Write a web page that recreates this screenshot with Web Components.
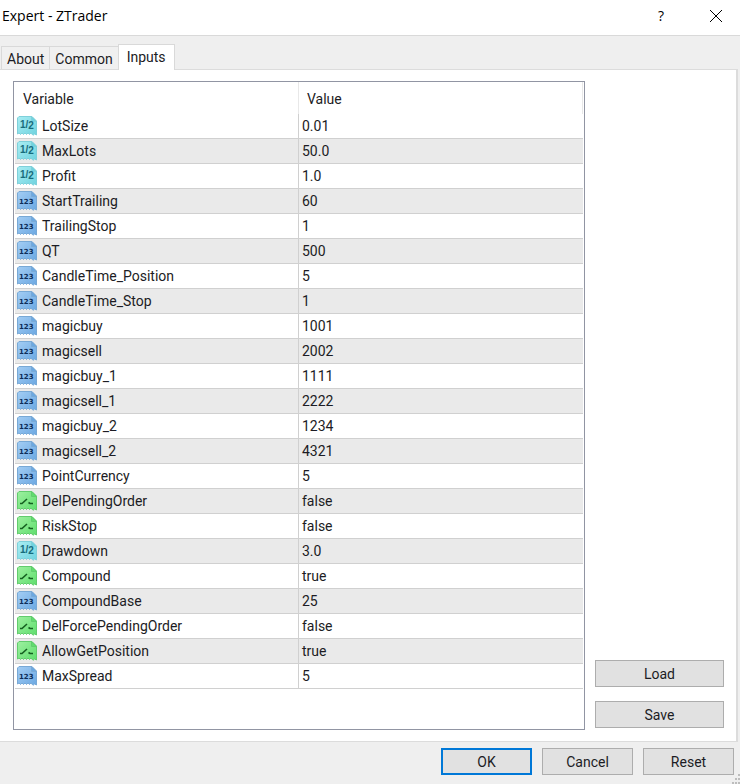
<!DOCTYPE html>
<html lang="en">
<head>
<meta charset="UTF-8">
<title>Expert - ZTrader</title>
<style>
    body {
        margin: 0;
        background: #efefef;
        color: #1c1c24;
        font-family: Roboto, "Liberation Sans", sans-serif;
        font-size: 14px;
        line-height: 16px;
    }
</style>
</head>
<body>
<expert-dialog caption="Expert - ZTrader">
    <tab-strip slot="tabs" labels="About,Common,Inputs" active="Inputs"></tab-strip>
    <inputs-table></inputs-table>
    <dialog-button slot="side">Load</dialog-button>
    <dialog-button slot="side">Save</dialog-button>
    <dialog-button slot="footer" primary>OK</dialog-button>
    <dialog-button slot="footer">Cancel</dialog-button>
    <dialog-button slot="footer">Reset</dialog-button>
</expert-dialog>

<script>
const INPUTS = [
    ['double', 'LotSize', '0.01'],
    ['double', 'MaxLots', '50.0'],
    ['double', 'Profit', '1.0'],
    ['int', 'StartTrailing', '60'],
    ['int', 'TrailingStop', '1'],
    ['int', 'QT', '500'],
    ['int', 'CandleTime_Position', '5'],
    ['int', 'CandleTime_Stop', '1'],
    ['int', 'magicbuy', '1001'],
    ['int', 'magicsell', '2002'],
    ['int', 'magicbuy_1', '1111'],
    ['int', 'magicsell_1', '2222'],
    ['int', 'magicbuy_2', '1234'],
    ['int', 'magicsell_2', '4321'],
    ['int', 'PointCurrency', '5'],
    ['bool', 'DelPendingOrder', 'false'],
    ['bool', 'RiskStop', 'false'],
    ['double', 'Drawdown', '3.0'],
    ['bool', 'Compound', 'true'],
    ['int', 'CompoundBase', '25'],
    ['bool', 'DelForcePendingOrder', 'false'],
    ['bool', 'AllowGetPosition', 'true'],
    ['int', 'MaxSpread', '5']
];

class ExpertDialog extends HTMLElement {
    connectedCallback() {
        const caption = this.getAttribute('caption') || 'Expert';

        this.attachShadow({ mode: 'open' });
        this.shadowRoot.innerHTML = `
            <style>
                :host {
                    display: flex;
                    flex-direction: column;
                    min-height: 100vh;
                }
                .titlebar {
                    display: flex;
                    align-items: center;
                    height: 35px;
                    padding: 0 10px 4px 2px;
                    box-sizing: border-box;
                    background: #fff;
                    color: #000;
                    font-family: "Open Sans", "Noto Sans", sans-serif;
                }
                h1 {
                    flex: 1;
                    margin: 0;
                    font-size: 14px;
                    font-weight: 400;
                }
                .titlebar button {
                    width: 28px;
                    height: 28px;
                    padding: 0;
                    border: 0;
                    background: none;
                    color: inherit;
                    font: inherit;
                }
                .titlebar button + button {
                    margin-left: 27px;
                }
                .titlebar svg {
                    display: block;
                    margin: auto;
                }
                .tabs {
                    padding: 8px 0 0 1px;
                    border-top: 1px solid #d9d9d9;
                }
                .pane {
                    flex: 1;
                    display: flex;
                    gap: 10px;
                    margin-right: 2px;
                    padding: 11px 12px 11px 13px;
                    background: #fff;
                    border: 1px solid #dcdcdc;
                    border-width: 1px 2px 1px 0;
                }
                .content {
                    flex: 1;
                    display: flex;
                }
                .side {
                    width: 129px;
                    display: flex;
                    flex-direction: column;
                    justify-content: flex-end;
                    gap: 14px;
                    padding-bottom: 2px;
                }
                .footer {
                    position: relative;
                    display: flex;
                    justify-content: flex-end;
                    gap: 10px;
                    padding: 6px 6px 9px;
                }
                .footer ::slotted(*) {
                    width: 91px;
                }
                .grip {
                    position: absolute;
                    right: 0;
                    bottom: 0;
                }
            </style>
            <header class="titlebar">
                <h1>${caption}</h1>
                <button type="button" title="Help">?</button>
                <button type="button" aria-label="Close">
                    <svg width="12" height="12" viewBox="0 0 12 12" stroke="#000" fill="none">
                        <path d="M0 0L12 12M12 0L0 12"/>
                    </svg>
                </button>
            </header>
            <div class="tabs"><slot name="tabs"></slot></div>
            <main class="pane">
                <div class="content"><slot></slot></div>
                <div class="side"><slot name="side"></slot></div>
            </main>
            <footer class="footer">
                <slot name="footer"></slot>
                <svg class="grip" width="8" height="11" viewBox="0 0 8 11" fill="#bdbdbd">
                    <path d="M6 1h2v2H6zM3 5h2v2H3zM6 5h2v2H6zM0 9h2v2H0zM3 9h2v2H3zM6 9h2v2H6z"/>
                </svg>
            </footer>
        `;
    }
}
customElements.define('expert-dialog', ExpertDialog);

class TabStrip extends HTMLElement {
    connectedCallback() {
        const labels = (this.getAttribute('labels') || '').split(',');
        const active = this.getAttribute('active');

        this.attachShadow({ mode: 'open' });
        this.shadowRoot.innerHTML = `
            <style>
                :host {
                    display: flex;
                    align-items: flex-end;
                }
                button {
                    height: 23px;
                    padding: 1px 5px 0;
                    border: 1px solid #d9d9d9;
                    border-width: 1px 0 0 1px;
                    background: #f0f0f0;
                    color: inherit;
                    font: inherit;
                }
                /* the open tab hangs over the top edge of the pane */
                button[aria-selected="true"] {
                    position: relative;
                    height: 26px;
                    margin-bottom: -1px;
                    padding: 0 8px 2px;
                    border-right-width: 1px;
                    background: #fff;
                }
            </style>
            ${labels.map(label => `
                <button type="button" role="tab" aria-selected="${label === active}">${label}</button>
            `).join('')}
        `;
        this.setAttribute('role', 'tablist');
    }
}
customElements.define('tab-strip', TabStrip);

class TypeIcon extends HTMLElement {
    connectedCallback() {
        const type = this.getAttribute('type') || 'int';
        const palette = {
            double: { light: '#a9edf3', dark: '#6fd3df', edge: '#7fd0da', ink: '#176c7c' },
            int: { light: '#a3cdf4', dark: '#6ba8e2', edge: '#78a9d6', ink: '#0b2d59' },
            bool: { light: '#9df0a0', dark: '#5fde6d', edge: '#62cc6e', ink: '#145f20' }
        }[type];
        const marks = {
            double: '<text x="3" y="12">1/<tspan dy="1">2</tspan></text>',
            int: '<text x="2" y="13">123</text>',
            bool: '<path d="M3 12.5H5L10 8M11.5 11.5L13 12.5H16" fill="none" stroke-width="1.6"/>'
        };

        this.attachShadow({ mode: 'open' });
        this.shadowRoot.innerHTML = `
            <style>
                :host {
                    display: block;
                    width: 20px;
                    height: 20px;
                }
                svg {
                    display: block;
                }
                text {
                    font: bold 7px "DejaVu Sans", sans-serif;
                }
                .double text {
                    font: bold 10px "Liberation Sans", sans-serif;
                }
            </style>
            <svg class="${type}" width="20" height="20" viewBox="0 0 20 20" aria-hidden="true">
                <defs>
                    <linearGradient id="paper" x1="0" y1="0" x2="1" y2="1">
                        <stop offset="0" stop-color="${palette.light}"/>
                        <stop offset="1" stop-color="${palette.dark}"/>
                    </linearGradient>
                </defs>
                <path d="M2 .5H15L19.5 5V19L17.5 18L16 19.3L14 17L12.5 18.5L11 17L9.5 18.5L8 17L6.5 18.5L5 17L3.5 18.5L2 17L.5 18V2Z"
                    fill="url(#paper)" stroke="${palette.edge}"/>
                <path d="M14.5 .5V5.5H19.5Z" fill="${palette.dark}" stroke="${palette.edge}"/>
                <g fill="${palette.ink}" ${type === 'bool' ? `stroke="${palette.ink}"` : ''}>${marks[type]}</g>
            </svg>
        `;
    }
}
customElements.define('type-icon', TypeIcon);

class InputsTable extends HTMLElement {
    connectedCallback() {
        this.attachShadow({ mode: 'open' });
        this.shadowRoot.innerHTML = `
            <style>
                :host {
                    display: block;
                    flex: 1;
                    padding: 0 1px;
                    border: 1px solid #9195a3;
                }
                table {
                    width: 100%;
                    border-collapse: separate;
                    border-spacing: 0;
                    table-layout: fixed;
                }
                th, td {
                    box-sizing: border-box;
                    padding: 0 0 0 3px;
                    text-align: left;
                    font-weight: 400;
                }
                th {
                    height: 32px;
                    padding: 2px 0 0 8px;
                    border-right: 1px solid #e8e8e8;
                }
                th:first-child {
                    width: 50%;
                }
                td {
                    height: 25px;
                    border-bottom: 1px solid #d0d0d0;
                }
                td:first-child {
                    padding-left: 2px;
                    border-right: 1px solid #d0d0d0;
                }
                tbody tr:nth-child(even) {
                    background: #eaeaea;
                }
                .name {
                    display: flex;
                    align-items: center;
                    gap: 5px;
                }
            </style>
            <table>
                <thead>
                    <tr><th scope="col">Variable</th><th scope="col">Value</th></tr>
                </thead>
                <tbody>
                    ${INPUTS.map(([type, name, value]) => `
                        <tr>
                            <td><div class="name"><type-icon type="${type}"></type-icon>${name}</div></td>
                            <td>${value}</td>
                        </tr>
                    `).join('')}
                </tbody>
            </table>
        `;
    }
}
customElements.define('inputs-table', InputsTable);

class DialogButton extends HTMLElement {
    connectedCallback() {
        this.attachShadow({ mode: 'open' });
        this.shadowRoot.innerHTML = `
            <style>
                :host {
                    display: block;
                }
                button {
                    display: block;
                    width: 100%;
                    height: 27px;
                    padding: 1px 0 0;
                    border: 1px solid #adadad;
                    background: #e1e1e1;
                    color: inherit;
                    font: inherit;
                }
                :host([primary]) button {
                    border: 2px solid #0078d7;
                }
            </style>
            <button type="button"><slot></slot></button>
        `;
    }
}
customElements.define('dialog-button', DialogButton);
</script>
</body>
</html>
